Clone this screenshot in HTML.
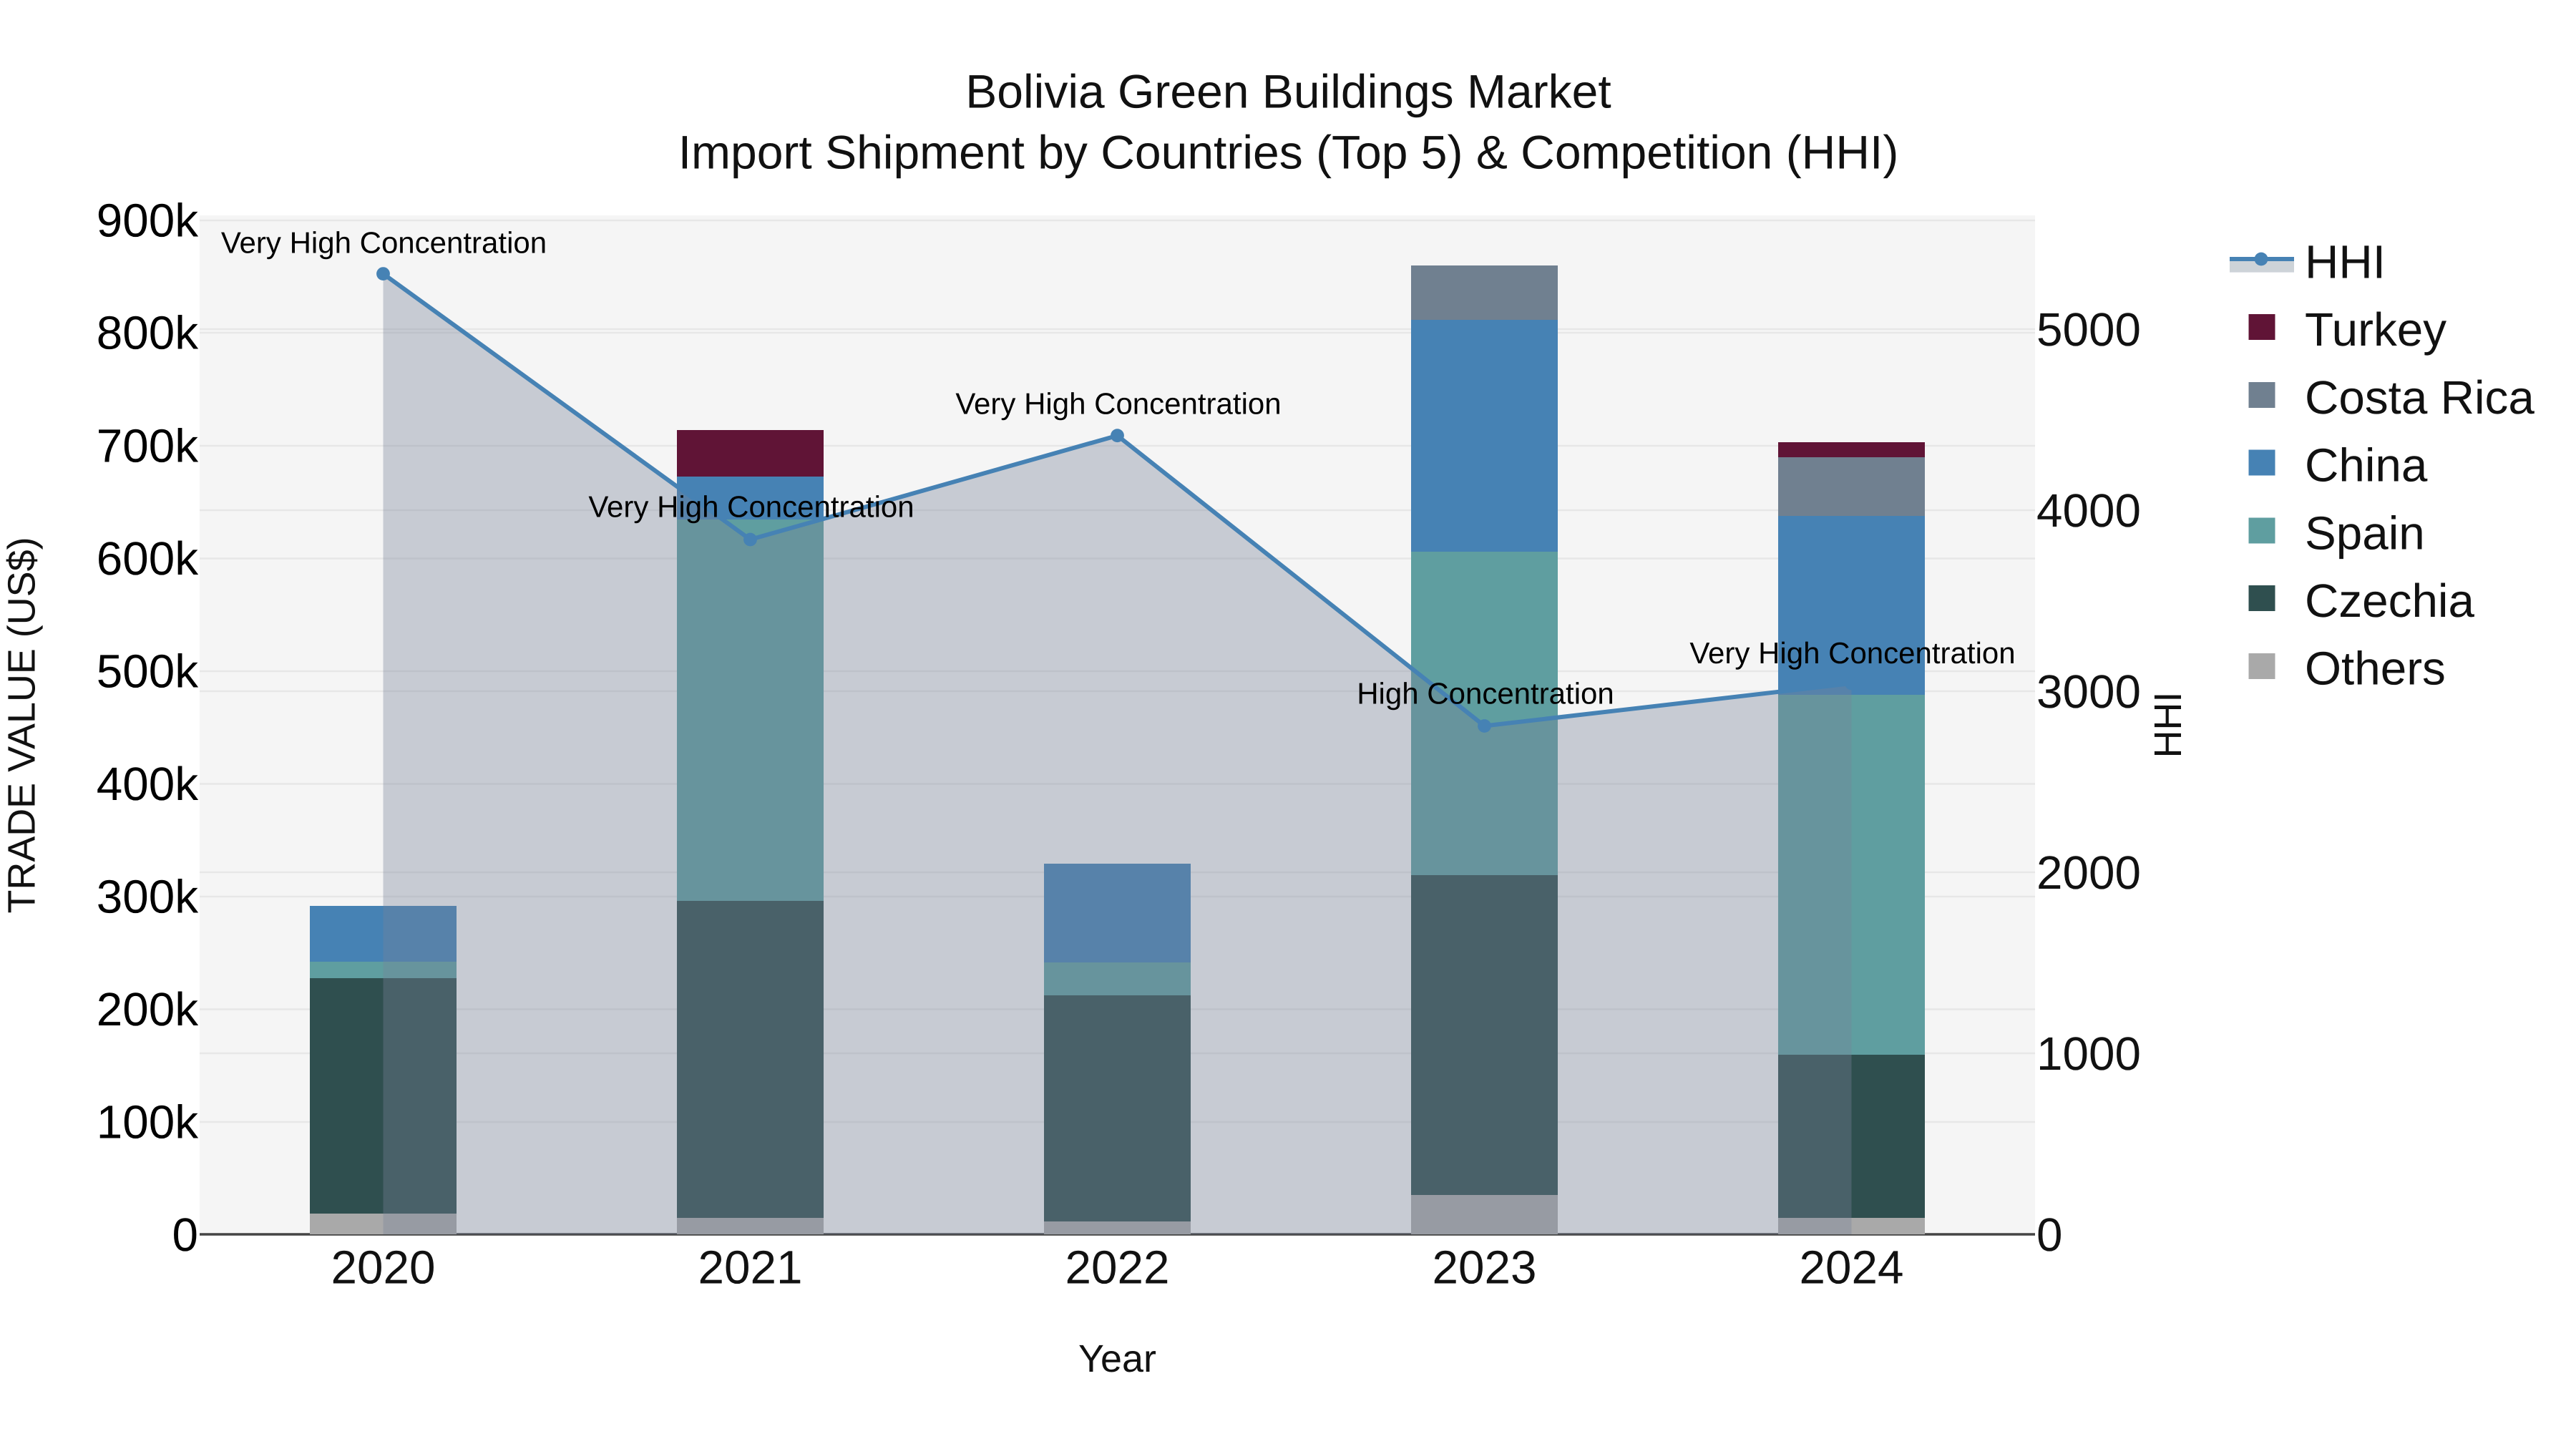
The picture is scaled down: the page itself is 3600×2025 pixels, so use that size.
<!DOCTYPE html>
<html lang="en">
<head>
<meta charset="utf-8">
<title>Bolivia Green Buildings Market</title>
<style>
html,body{margin:0;padding:0;background:#fff;width:3600px;height:2025px;overflow:hidden}
svg{display:block}
text{font-family:"Liberation Sans",Arial,sans-serif;text-rendering:geometricPrecision;white-space:pre}
.t{font-size:65.6px;fill:#111}
.h{font-size:66px;fill:#111;text-anchor:middle}
.k{font-size:65.6px;fill:#000;text-anchor:end}
.a{font-size:42px;fill:#000;text-anchor:middle}
.x{text-anchor:middle}
</style>
</head>
<body>
<svg width="3600" height="2025" viewBox="0 0 3600 2025" xmlns="http://www.w3.org/2000/svg">
<rect width="3600" height="2025" fill="#fff"/>
<!-- plot bg -->
<rect x="279" y="301" width="2565" height="1424" fill="#f5f5f5"/>
<!-- grid left -->
<g stroke="#e7e7e7" stroke-width="2.4" fill="none">
<path d="M279 308H2844M279 465H2844M279 623H2844M279 780.5H2844M279 938H2844M279 1095.5H2844M279 1253H2844M279 1410.5H2844M279 1568H2844"/>
<path d="M279 460H2844M279 713H2844M279 966H2844M279 1219H2844M279 1472H2844"/>
</g>
<path d="M279 1725H2844" stroke="#444" stroke-width="3.5"/>
<!-- bars -->
<g shape-rendering="crispEdges">
<rect x="433" y="1696" width="205" height="29" fill="#a9a9a9"/>
<rect x="433" y="1367" width="205" height="329" fill="#2f4f4f"/>
<rect x="433" y="1344" width="205" height="23" fill="#5f9ea0"/>
<rect x="433" y="1266" width="205" height="78" fill="#4682b4"/>

<rect x="946" y="1702" width="205" height="23" fill="#a9a9a9"/>
<rect x="946" y="1259" width="205" height="443" fill="#2f4f4f"/>
<rect x="946" y="726" width="205" height="533" fill="#5f9ea0"/>
<rect x="946" y="666" width="205" height="60" fill="#4682b4"/>
<rect x="946" y="601" width="205" height="65" fill="#601436"/>

<rect x="1459" y="1707" width="205" height="18" fill="#a9a9a9"/>
<rect x="1459" y="1391" width="205" height="316" fill="#2f4f4f"/>
<rect x="1459" y="1345" width="205" height="46" fill="#5f9ea0"/>
<rect x="1459" y="1207" width="205" height="138" fill="#4682b4"/>

<rect x="1972" y="1670" width="205" height="55" fill="#a9a9a9"/>
<rect x="1972" y="1223" width="205" height="447" fill="#2f4f4f"/>
<rect x="1972" y="771" width="205" height="452" fill="#5f9ea0"/>
<rect x="1972" y="447" width="205" height="324" fill="#4682b4"/>
<rect x="1972" y="371" width="205" height="76" fill="#708090"/>

<rect x="2485" y="1702" width="205" height="23" fill="#a9a9a9"/>
<rect x="2485" y="1474" width="205" height="228" fill="#2f4f4f"/>
<rect x="2485" y="971" width="205" height="503" fill="#5f9ea0"/>
<rect x="2485" y="721" width="205" height="250" fill="#4682b4"/>
<rect x="2485" y="639" width="205" height="82" fill="#708090"/>
<rect x="2485" y="618" width="205" height="21" fill="#601436"/>
</g>
<!-- HHI area -->
<polygon points="535.5,382.6 1048.5,754 1561.5,608.7 2074.5,1014.5 2587.5,955 2587.5,1725 535.5,1725" fill="#768298" fill-opacity=".36"/>
<polyline points="535.5,382.6 1048.5,754 1561.5,608.7 2074.5,1014.5 2587.5,955" fill="none" stroke="#4682b4" stroke-width="6" stroke-linejoin="round"/>
<g fill="#4682b4">
<circle cx="535.5" cy="382.6" r="9.4"/>
<circle cx="1048.5" cy="754" r="9.4"/>
<circle cx="1561.5" cy="608.7" r="9.4"/>
<circle cx="2074.5" cy="1014.5" r="9.4"/>
<circle cx="2587.5" cy="955" r="9.4"/>
</g>
<!-- annotations -->
<text class="a" x="536.5" y="353.5">Very High Concentration</text>
<text class="a" x="1050" y="722.5">Very High Concentration</text>
<text class="a" x="1563" y="578.5">Very High Concentration</text>
<text class="a" x="2076" y="983.5">High Concentration</text>
<text class="a" x="2589" y="927">Very High Concentration</text>
<!-- title -->
<text class="h" x="1800.5" y="150.4">Bolivia Green Buildings Market</text>
<text class="h" x="1800.5" y="235.7">Import Shipment by Countries (Top 5) &amp; Competition (HHI)</text>
<!-- left ticks -->
<text class="k" x="277" y="330.5">900k</text>
<text class="k" x="277" y="487.5">800k</text>
<text class="k" x="277" y="645.5">700k</text>
<text class="k" x="277" y="803">600k</text>
<text class="k" x="277" y="960.5">500k</text>
<text class="k" x="277" y="1118">400k</text>
<text class="k" x="277" y="1275.5">300k</text>
<text class="k" x="277" y="1433">200k</text>
<text class="k" x="277" y="1590.5">100k</text>
<text class="k" x="277" y="1748">0</text>
<!-- right ticks -->
<text class="t" x="2846" y="483">5000</text>
<text class="t" x="2846" y="736">4000</text>
<text class="t" x="2846" y="989">3000</text>
<text class="t" x="2846" y="1242">2000</text>
<text class="t" x="2846" y="1495">1000</text>
<text class="t" x="2846" y="1748">0</text>
<!-- x ticks -->
<text class="t x" x="535.5" y="1793.5">2020</text>
<text class="t x" x="1048.5" y="1793.5">2021</text>
<text class="t x" x="1561.5" y="1793.5">2022</text>
<text class="t x" x="2074.5" y="1793.5">2023</text>
<text class="t x" x="2587.5" y="1793.5">2024</text>
<!-- axis titles -->
<text x="1561.5" y="1917" text-anchor="middle" font-size="53.9" fill="#111">Year</text>
<text transform="translate(48.7 1013.5) rotate(-90)" text-anchor="middle" font-size="53.9" fill="#111">TRADE VALUE (US$)</text>
<text transform="translate(3048 1013) rotate(-90)" text-anchor="middle" font-size="53.9" fill="#111">HHI</text>
<!-- legend -->
<rect x="3116" y="362" width="90" height="18.6" fill="#cdd3d8"/>
<path d="M3116 362H3206" stroke="#4682b4" stroke-width="6"/>
<circle cx="3160" cy="362" r="9.4" fill="#4682b4"/>
<g shape-rendering="crispEdges">
<rect x="3142.6" y="439" width="36.7" height="36" fill="#601436"/>
<rect x="3142.6" y="534" width="36.7" height="36" fill="#708090"/>
<rect x="3142.6" y="628.6" width="36.7" height="36" fill="#4682b4"/>
<rect x="3142.6" y="723.4" width="36.7" height="36" fill="#5f9ea0"/>
<rect x="3142.6" y="818" width="36.7" height="36" fill="#2f4f4f"/>
<rect x="3142.6" y="912.8" width="36.7" height="36" fill="#a9a9a9"/>
</g>
<text class="t" x="3221" y="388.5">HHI</text>
<text class="t" x="3221" y="483.2">Turkey</text>
<text class="t" x="3221" y="577.9">Costa Rica</text>
<text class="t" x="3221" y="672.6">China</text>
<text class="t" x="3221" y="767.3">Spain</text>
<text class="t" x="3221" y="862">Czechia</text>
<text class="t" x="3221" y="956.7">Others</text>
</svg>
</body>
</html>
